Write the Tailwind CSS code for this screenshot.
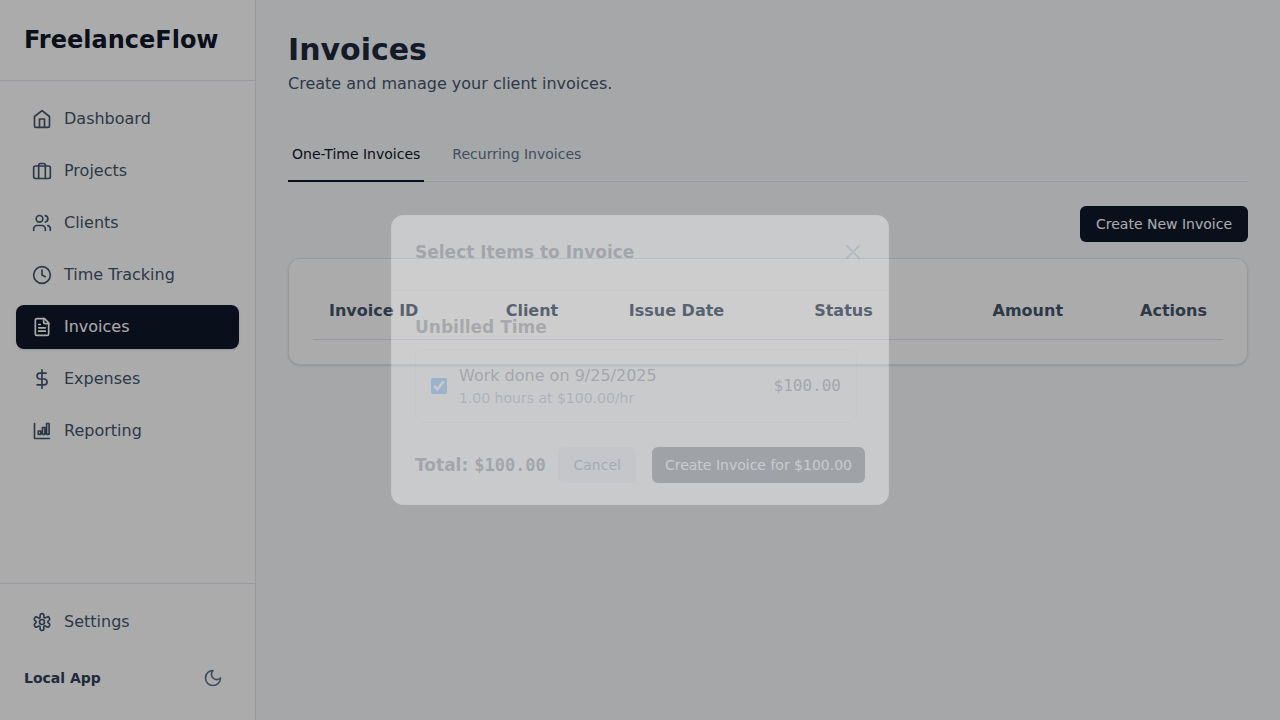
<!DOCTYPE html>
<html lang="en">
<head>
<meta charset="utf-8">
<meta name="viewport" content="width=device-width, initial-scale=1">
<title>FreelanceFlow – Invoices</title>
<script src="https://cdn.jsdelivr.net/npm/@tailwindcss/browser@4"></script>
</head>
<body class="relative bg-slate-50 font-['DejaVu_Sans',sans-serif] text-slate-900">
<svg class="hidden" aria-hidden="true">
  <defs>
    <symbol id="home" viewBox="0 0 24 24"><path d="m3 9 9-7 9 7v11a2 2 0 0 1-2 2H5a2 2 0 0 1-2-2z"/><path d="M9 22V12h6v10"/></symbol>
    <symbol id="briefcase" viewBox="0 0 24 24"><rect x="2" y="6" width="20" height="15" rx="2"/><path d="M8 21V5a2 2 0 0 1 2-2h4a2 2 0 0 1 2 2v16"/></symbol>
    <symbol id="users" viewBox="0 0 24 24"><path d="M16 21v-2a4 4 0 0 0-4-4H6a4 4 0 0 0-4 4v2"/><circle cx="9" cy="7" r="4"/><path d="M22 21v-2a4 4 0 0 0-3-3.870M16 3.130a4 4 0 0 1 0 7.750"/></symbol>
    <symbol id="clock" viewBox="0 0 24 24"><circle cx="12" cy="12" r="10"/><path d="M12 6v6l4 2"/></symbol>
    <symbol id="file" viewBox="0 0 24 24"><path d="M15 2H6a2 2 0 0 0-2 2v16a2 2 0 0 0 2 2h12a2 2 0 0 0 2-2V7z"/><path d="M14 2v4a2 2 0 0 0 2 2h4M10 9H8M16 13H8M16 17H8"/></symbol>
    <symbol id="dollar" viewBox="0 0 24 24"><path d="M12 1v22M17 5H9.500a3.500 3.500 0 0 0 0 7h5a3.500 3.500 0 0 1 0 7H6"/></symbol>
    <symbol id="chart" viewBox="0 0 24 24"><path d="M3 3v18h18M7.500 12h3v4h-3zM12.500 8h3v8h-3zM17.500 3h3v13h-3z"/></symbol>
    <symbol id="gear" viewBox="0 0 24 24"><path d="M12.200 2h-.4a2 2 0 0 0-2 2v2.300c0 1-.8 1.300-1.600.9l-2.400-1.200a1.600 1.600 0 0 0-2.300.8l-.7 1.500c-.3.800 0 1.400.7 1.800.9.500 1.500 1 1.500 1.900s-.6 1.500-1.500 2c-.7.400-.9 1-.6 1.800l.6 1.500c.4.900 1.300 1.200 2.200.8l2.300-1c.9-.4 1.800.1 1.800 1V20a2 2 0 0 0 2 2h.4a2 2 0 0 0 2-2v-2.300c0-1 .8-1.300 1.600-.9l2.400 1.200c.9.400 1.900.1 2.300-.8l.7-1.500c.3-.8 0-1.400-.7-1.800-.9-.5-1.500-1-1.500-1.900s.6-1.500 1.500-2c.7-.4.9-1 .6-1.800l-.6-1.500c-.4-.9-1.300-1.200-2.200-.8l-2.300 1c-.9.400-1.800-.1-1.800-1V4a2 2 0 0 0-2-2z"/><circle cx="12" cy="12" r="3"/></symbol>
    <symbol id="moon" viewBox="0 0 24 24"><path d="M12 3a6 6 0 0 0 9 9 9 9 0 1 1-9-9z"/></symbol>
    <symbol id="x" viewBox="0 0 24 24"><path d="M18 6 6 18M6 6l12 12"/></symbol>
  </defs>
</svg>

<div class="flex min-h-screen">
  <aside class="flex w-64 shrink-0 flex-col border-r border-slate-200 bg-white text-slate-600">
    <div class="border-b border-slate-200 p-6">
      <div class="text-2xl font-bold text-slate-900">FreelanceFlow</div>
    </div>
    <nav class="flex flex-1 flex-col gap-2 px-4 py-4">
      <a href="#" class="flex items-center gap-3 rounded-lg px-4 py-2.5"><svg class="size-5 fill-none stroke-current stroke-2 [stroke-linecap:round] [stroke-linejoin:round]"><use href="#home"/></svg>Dashboard</a>
      <a href="#" class="flex items-center gap-3 rounded-lg px-4 py-2.5"><svg class="size-5 fill-none stroke-current stroke-2 [stroke-linecap:round] [stroke-linejoin:round]"><use href="#briefcase"/></svg>Projects</a>
      <a href="#" class="flex items-center gap-3 rounded-lg px-4 py-2.5"><svg class="size-5 fill-none stroke-current stroke-2 [stroke-linecap:round] [stroke-linejoin:round]"><use href="#users"/></svg>Clients</a>
      <a href="#" class="flex items-center gap-3 rounded-lg px-4 py-2.5"><svg class="size-5 fill-none stroke-current stroke-2 [stroke-linecap:round] [stroke-linejoin:round]"><use href="#clock"/></svg>Time Tracking</a>
      <a href="#" aria-current="page" class="flex items-center gap-3 rounded-lg bg-slate-900 px-4 py-2.5 text-white shadow-sm"><svg class="size-5 fill-none stroke-current stroke-2 [stroke-linecap:round] [stroke-linejoin:round]"><use href="#file"/></svg>Invoices</a>
      <a href="#" class="flex items-center gap-3 rounded-lg px-4 py-2.5"><svg class="size-5 fill-none stroke-current stroke-2 [stroke-linecap:round] [stroke-linejoin:round]"><use href="#dollar"/></svg>Expenses</a>
      <a href="#" class="flex items-center gap-3 rounded-lg px-4 py-2.5"><svg class="size-5 fill-none stroke-current stroke-2 [stroke-linecap:round] [stroke-linejoin:round]"><use href="#chart"/></svg>Reporting</a>
    </nav>
    <div class="border-t border-slate-200 p-4">
      <a href="#" class="flex items-center gap-3 rounded-lg px-4 py-2.5"><svg class="size-5 fill-none stroke-current stroke-2 [stroke-linecap:round] [stroke-linejoin:round]"><use href="#gear"/></svg>Settings</a>
      <div class="mt-4 flex items-center justify-between px-2 pb-2">
        <span class="text-sm font-semibold text-slate-700">Local App</span>
        <button type="button" aria-label="Toggle dark mode" class="rounded-lg p-2 text-slate-500"><svg class="size-5 fill-none stroke-current stroke-2 [stroke-linecap:round] [stroke-linejoin:round]"><use href="#moon"/></svg></button>
      </div>
    </div>
  </aside>

  <main class="min-w-0 flex-1 p-8">
    <h1 class="text-3xl font-bold text-slate-800">Invoices</h1>
    <p class="mt-1 text-slate-600">Create and manage your client invoices.</p>
    <div role="tablist" class="mt-8 flex gap-6 border-b border-slate-200 text-sm font-medium">
      <button type="button" role="tab" aria-selected="true" class="-mb-px border-b-2 border-slate-900 px-1 pt-4 pb-4 text-slate-900">One-Time Invoices</button>
      <button type="button" role="tab" aria-selected="false" class="-mb-px border-b-2 border-transparent px-1 pt-4 pb-4 text-slate-500">Recurring Invoices</button>
    </div>
    <div class="mt-6 flex justify-end">
      <button type="button" class="rounded-md bg-slate-900 px-4 py-2 text-sm font-medium text-white">Create New Invoice</button>
    </div>
    <section class="mt-4 rounded-xl border border-slate-200 bg-white p-6 shadow-sm">
      <table class="w-full text-left text-slate-600">
        <thead>
          <tr class="border-b border-slate-200">
            <th class="p-4 font-semibold">Invoice ID</th>
            <th class="p-4 font-semibold">Client</th>
            <th class="p-4 font-semibold">Issue Date</th>
            <th class="p-4 font-semibold">Status</th>
            <th class="p-4 text-right font-semibold">Amount</th>
            <th class="p-4 text-right font-semibold">Actions</th>
          </tr>
        </thead>
      </table>
    </section>
  </main>
</div>

<div class="fixed inset-0 bg-black/33"></div>

<!-- Dialog, partly faded in over the dimmed page -->
<div class="absolute inset-0 grid place-items-center">
  <div class="relative w-full max-w-[498px]">
    <div class="absolute inset-0 rounded-xl bg-black/6"></div>
    <div role="dialog" aria-modal="true" aria-labelledby="dialog-title" class="relative rounded-xl border border-slate-200 bg-white opacity-18 mix-blend-plus-lighter">
      <div class="flex items-center justify-between border-b border-slate-200 px-[23px] pt-6 pb-[26px]">
        <h2 id="dialog-title" class="text-[17px] leading-6 font-semibold text-slate-800">Select Items to Invoice</h2>
        <button type="button" aria-label="Close" class="text-slate-400"><svg class="size-6 fill-none stroke-current stroke-2 [stroke-linecap:round] [stroke-linejoin:round]"><use href="#x"/></svg></button>
      </div>
      <div class="px-[23px] pt-6 pb-[21px]">
        <h3 class="text-[17px] leading-6 font-semibold text-slate-800">Unbilled Time</h3>
        <label class="mt-2.5 mr-2 flex items-center gap-3 rounded-lg border border-slate-200 px-[15px] py-3.5">
          <input type="checkbox" checked class="size-4">
          <span class="flex-1">
            <span class="block leading-6 text-slate-800">Work done on 9/25/2025</span>
            <span class="block text-sm text-slate-500">1.00 hours at $100.00/hr</span>
          </span>
          <span class="font-['DejaVu_Sans_Mono',monospace] text-slate-800">$100.00</span>
        </label>
        <div class="mt-6 flex items-center justify-between">
          <div class="text-[17px] leading-6 font-bold whitespace-nowrap text-slate-800">Total: <span class="font-['DejaVu_Sans_Mono',monospace]">$100.00</span></div>
          <div class="flex gap-4 text-sm font-medium whitespace-nowrap">
            <button type="button" class="rounded-md bg-slate-200 px-[15px] py-2 text-slate-700">Cancel</button>
            <button type="button" class="rounded-md bg-slate-900 px-[13px] py-2 text-white">Create Invoice for $100.00</button>
          </div>
        </div>
      </div>
    </div>
  </div>
</div>
</body>
</html>
